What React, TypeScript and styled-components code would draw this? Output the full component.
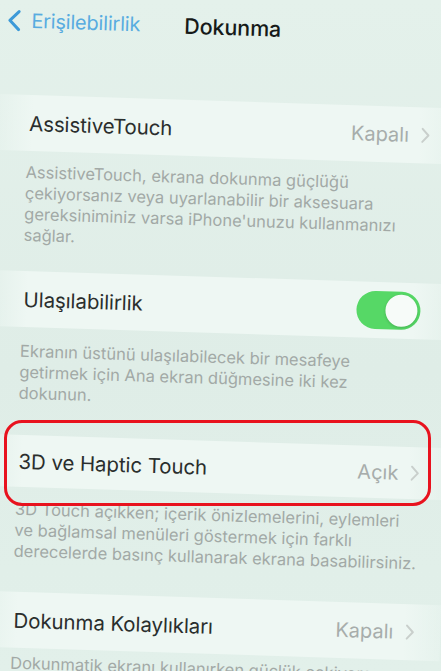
import React from "react";
import styled, { createGlobalStyle } from "styled-components";

const GlobalStyle = createGlobalStyle`
  html, body {
    margin: 0;
    padding: 0;
    width: 441px;
    height: 671px;
    overflow: hidden;
    background: #e1eee8;
  }
  * {
    box-sizing: border-box;
  }
`;

const Page = styled.div`
  position: relative;
  width: 441px;
  height: 671px;
  overflow: hidden;
  background: linear-gradient(180deg, #e4f1eb 0%, #dfede7 55%, #e2f0ea 100%);
  font-family: Inter, "Noto Sans", "Liberation Sans", sans-serif;
`;

// the whole screen sits slightly tilted, like the handheld phone it shows
const Screen = styled.div`
  width: 460px;
  transform-origin: 0 0;
  transform: rotate(1.8deg);
  display: flex;
  flex-direction: column;
`;

const NavBar = styled.div`
  height: 40px;
  display: flex;
  align-items: center;
  padding-left: 8px;
  gap: 9px;
`;

const BackLink = styled.div`
  display: flex;
  align-items: center;
  gap: 10px;
  width: 168px;
  color: #58ace0;
  font-size: 20px;
  letter-spacing: -0.2px;
`;

const NavTitle = styled.div`
  color: #161a19;
  font-size: 21.5px;
  font-weight: 500;
  letter-spacing: -0.1px;
`;

const Group = styled.div<{ $top: number }>`
  margin-top: ${(p) => p.$top}px;
  display: flex;
  flex-direction: column;
`;

const Cell = styled.div<{ $h: number }>`
  height: ${(p) => p.$h}px;
  display: flex;
  align-items: center;
  justify-content: space-between;
  padding: 0 26px 0 33px;
  background: linear-gradient(90deg, rgba(240, 249, 245, 0.2) 0%, #eef7f3 8%, #eef7f3 92%, rgba(240, 249, 245, 0.3) 100%);
`;

const CellTitle = styled.span`
  color: #2a2e2d;
  font-size: 20.5px;
  letter-spacing: -0.1px;
`;

const CellValue = styled.span`
  display: flex;
  align-items: center;
  gap: 12px;
  color: #a7adab;
  font-size: 20px;
`;

const Footer = styled.div<{ $pt: number; $pb: number }>`
  padding: ${(p) => `${p.$pt}px 0 ${p.$pb}px 31px`};
  color: #a2a9a6;
  font-size: 16.5px;
  line-height: 21px;
  white-space: nowrap;
`;

const Toggle = styled.div<{ $on: boolean }>`
  width: 64px;
  height: 38px;
  border-radius: 19px;
  padding: 3px;
  margin-right: 4px;
  display: flex;
  justify-content: ${(p) => (p.$on ? "flex-end" : "flex-start")};
  background: ${(p) => (p.$on ? "#56d866" : "#d9dedc")};
`;

const Knob = styled.div`
  width: 32px;
  height: 32px;
  border-radius: 50%;
  background: #f7fbf9;
  box-shadow: 0 1px 3px rgba(0, 0, 0, 0.18);
`;

// red marker drawn over the haptic touch row
const Highlight = styled.div`
  position: absolute;
  left: 4px;
  top: 420px;
  width: 427px;
  height: 86px;
  border: 3px solid #e8121e;
  border-radius: 18px;
  pointer-events: none;
`;

const BackChevron = () => (
  <svg width="14" height="22" viewBox="0 0 14 22">
    <path d="M11.5 2 L2.5 11 L11.5 20" fill="none" stroke="#3d9ad8" strokeWidth="3" strokeLinecap="round" strokeLinejoin="round" />
  </svg>
);

const Chevron = () => (
  <svg width="9" height="16" viewBox="0 0 9 16">
    <path d="M1.5 1.5 L7.5 8 L1.5 14.5" fill="none" stroke="#c9cfcc" strokeWidth="2" strokeLinecap="round" strokeLinejoin="round" />
  </svg>
);

type Row = {
  title: string;
  value?: string;
  toggle?: boolean;
  top: number;
  height: number;
  padTop: number;
  padBottom: number;
  footer: string[];
};

const rows: Row[] = [
  {
    title: "AssistiveTouch",
    value: "Kapalı",
    top: 54,
    height: 56,
    padTop: 11,
    padBottom: 25,
    footer: [
      "AssistiveTouch, ekrana dokunma güçlüğü",
      "çekiyorsanız veya uyarlanabilir bir aksesuara",
      "gereksiniminiz varsa iPhone'unuzu kullanmanızı",
      "sağlar.",
    ],
  },
  {
    title: "Ulaşılabilirlik",
    toggle: true,
    top: 0,
    height: 56,
    padTop: 14,
    padBottom: 31,
    footer: [
      "Ekranın üstünü ulaşılabilecek bir mesafeye",
      "getirmek için Ana ekran düğmesine iki kez",
      "dokunun.",
    ],
  },
  {
    title: "3D ve Haptic Touch",
    value: "Açık",
    top: 0,
    height: 52,
    padTop: 12,
    padBottom: 30,
    footer: [
      "3D Touch açıkken; içerik önizlemelerini, eylemleri",
      "ve bağlamsal menüleri göstermek için farklı",
      "derecelerde basınç kullanarak ekrana basabilirsiniz.",
    ],
  },
  {
    title: "Dokunma Kolaylıkları",
    value: "Kapalı",
    top: 0,
    height: 56,
    padTop: 5,
    padBottom: 30,
    footer: [
      "Dokunmatik ekranı kullanırken güçlük çekiyorsanız,",
      "ekranın dokunuşlarınıza nasıl yanıt vereceğini",
      "değiştirmek için bu ayarları kullanın.",
    ],
  },
];

export default function App() {
  return (
    <Page>
      <GlobalStyle />
      <Screen>
        <NavBar>
          <BackLink>
            <BackChevron />
            Erişilebilirlik
          </BackLink>
          <NavTitle>Dokunma</NavTitle>
        </NavBar>
        {rows.map((row) => (
          <Group key={row.title} $top={row.top}>
            <Cell $h={row.height}>
              <CellTitle>{row.title}</CellTitle>
              {row.toggle !== undefined ? (
                <Toggle $on={row.toggle}>
                  <Knob />
                </Toggle>
              ) : (
                <CellValue>
                  {row.value}
                  <Chevron />
                </CellValue>
              )}
            </Cell>
            <Footer $pt={row.padTop} $pb={row.padBottom}>
              {row.footer.map((line) => (
                <div key={line}>{line}</div>
              ))}
            </Footer>
          </Group>
        ))}
      </Screen>
      <Highlight />
    </Page>
  );
}
